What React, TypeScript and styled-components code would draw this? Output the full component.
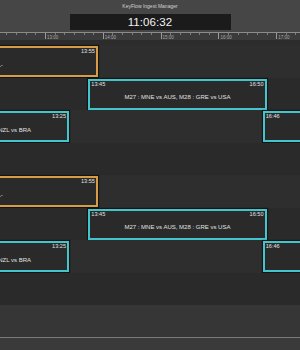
import styled, { createGlobalStyle } from "styled-components";

const ORIGIN_X = 45; // x of 13:00
const PX_PER_HOUR = 57.8;

const toX = (min: number) => ORIGIN_X + (min * PX_PER_HOUR) / 60;

const fmt = (min: number) => {
  const total = 13 * 60 + min;
  const h = Math.floor(total / 60);
  const m = ((total % 60) + 60) % 60;
  return `${String(h).padStart(2, "0")}:${String(m).padStart(2, "0")}`;
};

type Kind = "orange" | "cyan";

type Slot = {
  start: number;
  end: number;
  kind: Kind;
  label: string;
};

const GlobalStyle = createGlobalStyle`
  html, body {
    margin: 0;
    padding: 0;
    background: #2c2c2c;
    overflow: hidden;
  }
  body {
    font-family: "Liberation Sans", Arial, sans-serif;
  }
`;

const Screen = styled.div`
  width: 300px;
  height: 350px;
  display: flex;
  flex-direction: column;
  overflow: hidden;
  background: #2c2c2c;
`;

const Header = styled.div`
  height: 32px;
  background: #464646;
  display: flex;
  flex-direction: column;
  align-items: center;
  flex-shrink: 0;
`;

const Title = styled.div`
  margin-top: 4px;
  font-size: 5px;
  line-height: 5px;
  color: #d2d2d2;
`;

const Clock = styled.div`
  margin-top: 5px;
  width: 161px;
  height: 16px;
  background: #1b1b1b;
  color: #f3f3f3;
  font-size: 11.5px;
  display: flex;
  align-items: center;
  justify-content: center;
  letter-spacing: 0.1px;
`;

const Ruler = styled.div`
  position: relative;
  height: 7px;
  background: #3b3b3b;
  border-top: 1px solid #8c8c8c;
  flex-shrink: 0;
`;

const Tick = styled.div<{ $major: boolean }>`
  position: absolute;
  top: 0;
  width: 1px;
  height: ${(p) => (p.$major ? "6px" : "2px")};
  background: ${(p) => (p.$major ? "#9a9a9a" : "#7c7c7c")};
`;

const TickLabel = styled.span`
  position: absolute;
  top: 1.5px;
  font-size: 4.5px;
  line-height: 5px;
  color: #a9a9a9;
`;

const Tracks = styled.div`
  padding-top: 5px;
  display: flex;
  flex-direction: column;
  flex-shrink: 0;
`;

const Track = styled.div<{ $alt: boolean }>`
  position: relative;
  height: 32.5px;
  background: ${(p) => (p.$alt ? "#2a2a2a" : "#2e2e2e")};
`;

const Event = styled.div<{ $kind: Kind }>`
  position: absolute;
  top: 1px;
  height: 31px;
  box-sizing: border-box;
  border: 2px solid ${(p) => (p.$kind === "orange" ? "#d89c47" : "#43c5ce")};
  background: #2a2a2a;
  box-shadow: 0 0 1px 1px rgba(0, 0, 0, 0.55);
  display: flex;
  flex-direction: column;
  color: #e2e2e2;
`;

const Times = styled.div`
  display: flex;
  justify-content: space-between;
  padding: 0 1px;
  font-size: 5.6px;
  line-height: 7px;
`;

const Label = styled.div`
  flex: 1;
  display: flex;
  align-items: center;
  justify-content: center;
  padding-bottom: 1px;
  font-size: 6px;
  white-space: nowrap;
`;

const LowerBand = styled.div`
  height: 32px;
  background: #363636;
  flex-shrink: 0;
`;

const Divider = styled.div`
  height: 1px;
  background: #7a7a7a;
  flex-shrink: 0;
`;

const BottomBar = styled.div`
  flex: 1;
  background: #3a3a3a;
`;

const group: Slot[][] = [
  [
    {
      start: -250,
      end: 55,
      kind: "orange",
      label: "Studio Live - Basketball Preview - ALL-",
    },
  ],
  [
    {
      start: 45,
      end: 230,
      kind: "cyan",
      label: "M27 : MNE vs AUS, M28 : GRE vs USA",
    },
  ],
  [
    { start: -88, end: 25, kind: "cyan", label: "NZL vs BRA" },
    { start: 226, end: 370, kind: "cyan", label: "M31 : ESP vs LTU" },
  ],
  [],
];

const rows = [...group, ...group];

// only the ticks that fall inside the visible window
const ticks = Array.from({ length: 36 }, (_, i) => -40 + i * 10).filter(
  (t) => toX(t) < 300
);

export default function App() {
  return (
    <>
      <GlobalStyle />
      <Screen>
        <Header>
          <Title>KeyFlow Ingest Manager</Title>
          <Clock>11:06:32</Clock>
        </Header>
        <Ruler>
          {ticks.map((t) => {
            const major = t % 60 === 0;
            const x = toX(t);
            return (
              <div key={t}>
                <Tick $major={major} style={{ left: x }} />
                {major && <TickLabel style={{ left: x + 2 }}>{fmt(t)}</TickLabel>}
              </div>
            );
          })}
        </Ruler>
        <Tracks>
          {rows.map((slots, i) => (
            <Track key={i} $alt={i % 2 === 1}>
              {slots.map((s) => (
                <Event
                  key={s.start}
                  $kind={s.kind}
                  style={{ left: toX(s.start), width: toX(s.end) - toX(s.start) }}
                >
                  <Times>
                    <span>{fmt(s.start)}</span>
                    <span>{fmt(s.end)}</span>
                  </Times>
                  <Label>{s.label}</Label>
                </Event>
              ))}
            </Track>
          ))}
        </Tracks>
        <LowerBand />
        <Divider />
        <BottomBar />
      </Screen>
    </>
  );
}
